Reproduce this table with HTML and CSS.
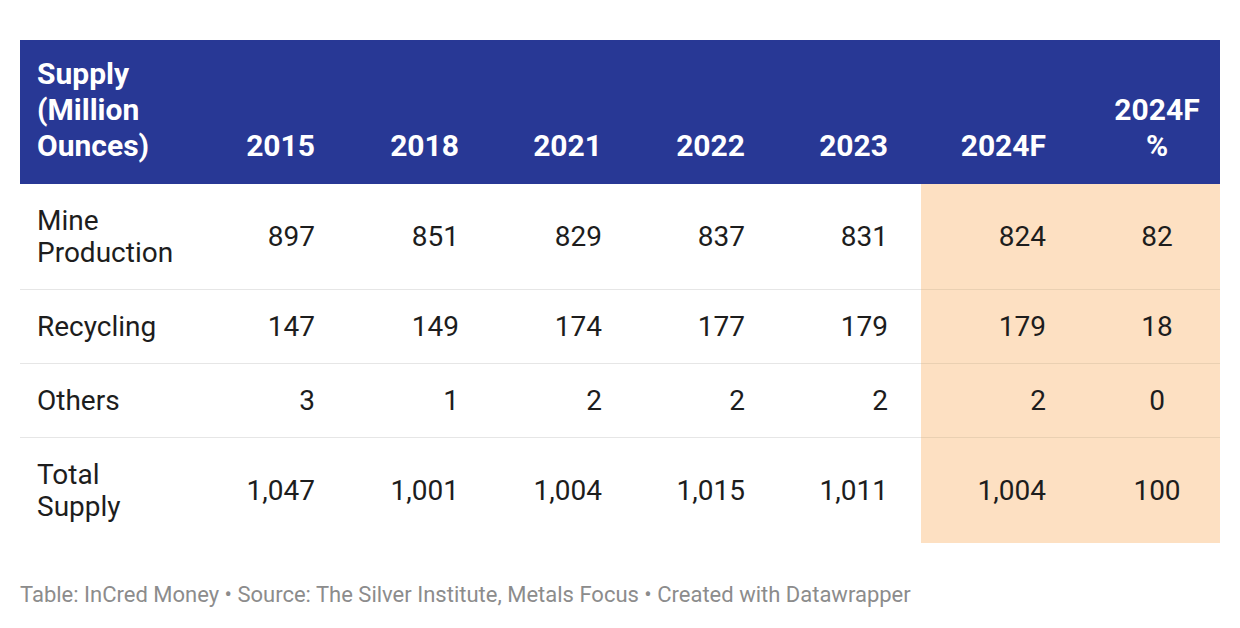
FILE: index.html
```html
<!DOCTYPE html>
<html>
<head>
<meta charset="utf-8">
<link rel="stylesheet" href="styles.css">
</head>
<body>
<div class="chart">
  <table class="tbl">
    <colgroup>
      <col class="c-label"><col class="c-num"><col class="c-num"><col class="c-num2"><col class="c-num2"><col class="c-num2"><col class="c-hl"><col class="c-pct">
    </colgroup>
    <thead>
      <tr>
        <th class="label">Supply<br>(Million<br>Ounces)</th>
        <th>2015</th><th>2018</th><th>2021</th><th>2022</th><th>2023</th>
        <th class="hl">2024F</th>
        <th class="pct">2024F<br>%</th>
      </tr>
    </thead>
    <tbody>
      <tr>
        <td class="label">Mine<br>Production</td>
        <td>897</td><td>851</td><td>829</td><td>837</td><td>831</td>
        <td class="hl">824</td><td class="hl pct">82</td>
      </tr>
      <tr>
        <td class="label">Recycling</td>
        <td>147</td><td>149</td><td>174</td><td>177</td><td>179</td>
        <td class="hl">179</td><td class="hl pct">18</td>
      </tr>
      <tr>
        <td class="label">Others</td>
        <td>3</td><td>1</td><td>2</td><td>2</td><td>2</td>
        <td class="hl">2</td><td class="hl pct">0</td>
      </tr>
      <tr class="last">
        <td class="label">Total<br>Supply</td>
        <td>1,047</td><td>1,001</td><td>1,004</td><td>1,015</td><td>1,011</td>
        <td class="hl">1,004</td><td class="hl pct">100</td>
      </tr>
    </tbody>
  </table>
  <p class="footer">Table: InCred Money • Source: The Silver Institute, Metals Focus • Created with Datawrapper</p>
</div>
</body>
</html>
```
FILE: styles.css
```css
html, body {
  margin: 0;
  padding: 0;
  background: #ffffff;
}
.chart {
  padding: 40px 20px 0 20px;
  font-family: Roboto, "Liberation Sans", sans-serif;
}
.tbl {
  width: 1200px;
  border-collapse: collapse;
  table-layout: fixed;
}
.c-label { width: 184px; }
.c-num { width: 144px; }
.c-num2 { width: 143px; }
.c-hl { width: 158px; }
.c-pct { width: 141px; }
.tbl th {
  background: #283895;
  color: #ffffff;
  font-weight: 700;
  font-size: 30px;
  line-height: 36px;
  text-align: right;
  vertical-align: bottom;
  padding: 16px 33px 20px 0;
}
.tbl th.label {
  text-align: left;
  padding-left: 17px;
  padding-right: 0;
}
.tbl th.pct,
.tbl td.pct {
  text-align: center;
  padding-left: 15px;
  padding-right: 0;
}
.tbl td {
  font-size: 28px;
  line-height: 32px;
  color: #1d1d1d;
  text-align: right;
  vertical-align: middle;
  padding: 21px 33px 20px 0;
  border-bottom: 1px solid #e6e6e6;
}
.tbl td.label {
  text-align: left;
  padding-left: 17px;
  padding-right: 0;
}
.tbl td.hl {
  background: #fde0c2;
  border-bottom-color: #ead0b2;
}
.tbl tr.last td {
  border-bottom: none;
}
.footer {
  margin: 38px 0 0 0;
  font-size: 22px;
  line-height: 28px;
  color: #8c8c8c;
}
```
